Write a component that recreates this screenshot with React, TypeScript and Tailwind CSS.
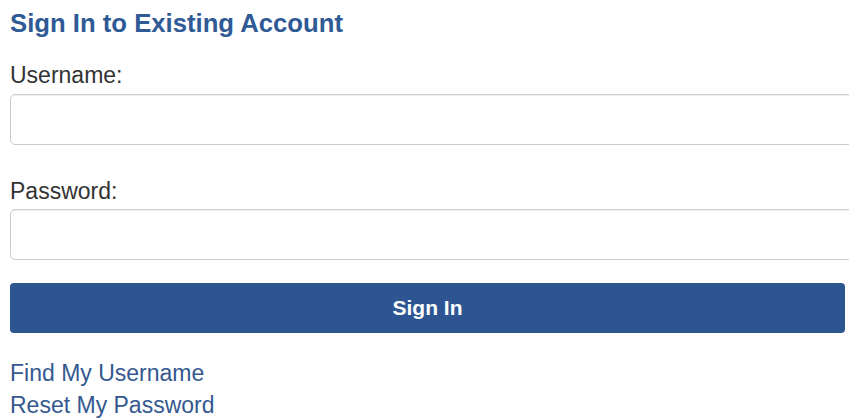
import React from "react";

const App = () => {
  return (
    <div className="w-[849px] h-[420px] overflow-hidden bg-white pl-[10px] font-['Liberation_Sans',Arial,sans-serif]">
      <h2 className="pt-[8px] text-[25.7px] leading-[30px] font-bold text-[#2f5a96]">
        Sign In to Existing Account
      </h2>
      <label className="mt-[24px] block text-[23px] leading-[26px] text-[#333333]">Username:</label>
      <input
        type="text"
        className="mt-[6px] block h-[51px] w-[860px] rounded-[5px] border border-[#cccccc] bg-white shadow-[inset_0_1px_1px_rgba(0,0,0,0.075)]"
      />
      <label className="mt-[33px] block text-[23px] leading-[26px] text-[#333333]">Password:</label>
      <input
        type="password"
        className="mt-[5px] block h-[51px] w-[860px] rounded-[5px] border border-[#cccccc] bg-white shadow-[inset_0_1px_1px_rgba(0,0,0,0.075)]"
      />
      <button className="mt-[23px] block h-[50px] w-[835px] rounded-[4px] bg-[#2d5592] text-[21px] font-bold text-white">
        Sign In
      </button>
      <div className="mt-[24px] flex flex-col">
        <a href="#" className="text-[23px] leading-[32px] text-[#34588f]">Find My Username</a>
        <a href="#" className="text-[23px] leading-[32px] text-[#34588f]">Reset My Password</a>
      </div>
    </div>
  );
};

export default App;
